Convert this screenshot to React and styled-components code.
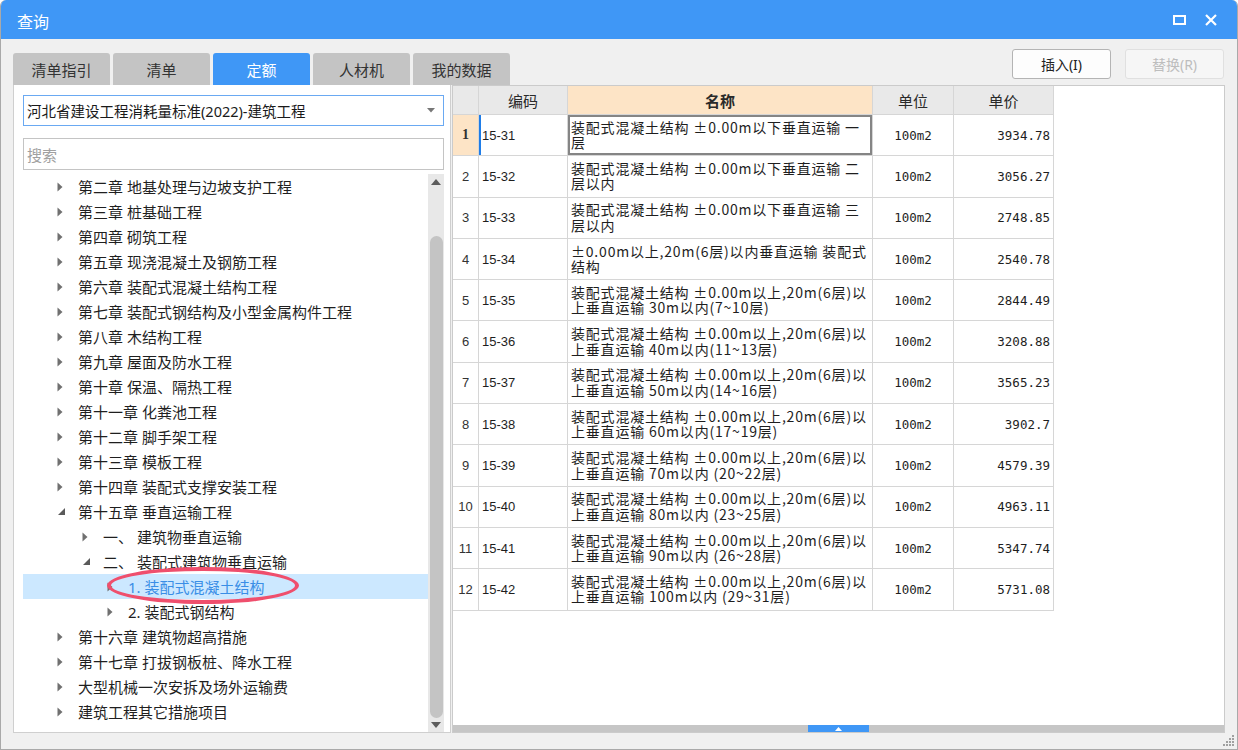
import React from 'react';
import styled, { createGlobalStyle } from 'styled-components';

const GlobalStyle = createGlobalStyle`
  * { box-sizing: border-box; }
  body {
    margin: 0;
    background: #ffffff;
    font-family: "Noto Sans", "Noto Sans CJK SC", sans-serif;
  }
`;

const BLUE = '#3f97f6';
const GRID = '#d6d6d6';

const Window = styled.div`
  position: relative;
  width: 1238px;
  height: 750px;
  display: flex;
  flex-direction: column;
  background: #f0f0f0;
  border: 1px solid #a9a9a9;
  border-top: none;
  border-radius: 6px 6px 0 0;
  overflow: hidden;
`;

const TitleBar = styled.div`
  height: 39px;
  flex: none;
  display: flex;
  align-items: center;
  padding: 0 10px 0 16px;
  background: ${BLUE};
  color: #fff;
  font-family: "Noto Sans CJK SC", sans-serif;
  font-size: 16px;
`;

const Title = styled.span`
  flex: 1;
  margin-top: 2px;
`;

const TitleButton = styled.span`
  width: 32px;
  height: 24px;
  display: flex;
  align-items: center;
  justify-content: center;
`;

const Body = styled.div`
  flex: 1;
  min-height: 0;
  display: grid;
  grid-template-columns: 438px 773px;
  grid-template-rows: 46px 1fr;
  column-gap: 1px;
  padding: 0 12px 16px 12px;
`;

const TabBar = styled.div`
  display: flex;
  align-items: flex-end;
  gap: 3px;
  position: relative;
  z-index: 1;
`;

const Tab = styled.div`
  flex: none;
  width: 97px;
  height: 32px;
  display: flex;
  align-items: center;
  justify-content: center;
  border-radius: 3px 3px 0 0;
  background: ${(p) => (p.$active ? BLUE : '#c4c4c4')};
  color: ${(p) => (p.$active ? '#fff' : '#333')};
  font-family: "Noto Sans CJK SC", sans-serif;
  font-size: 15px;
`;

const ButtonBar = styled.div`
  display: flex;
  justify-content: flex-end;
  align-items: flex-start;
  gap: 14px;
  padding: 10px 1px 0 0;
`;

const Button = styled.div`
  width: 99px;
  height: 30px;
  display: flex;
  align-items: center;
  justify-content: center;
  border-radius: 3px;
  border: 1px solid ${(p) => (p.$disabled ? '#e0e0e0' : '#b4b4b4')};
  background: ${(p) => (p.$disabled ? '#f6f6f6' : '#fdfdfd')};
  color: ${(p) => (p.$disabled ? '#bdbdbd' : '#222')};
  font-family: "Noto Sans", "Noto Sans CJK SC", sans-serif;
  font-size: 14px;
`;

const LeftPanel = styled.div`
  display: flex;
  flex-direction: column;
  min-height: 0;
  background: #fff;
  border: 1px solid #cfcfcf;
  border-top: none;
  padding: 10px 6px 0 9px;
`;

const Select = styled.div`
  height: 31px;
  display: flex;
  align-items: center;
  padding: 0 8px 0 3px;
  border: 1px solid #6aa9f2;
  color: #1a1a1a;
  font-family: "Noto Sans", "Noto Sans CJK SC", sans-serif;
  font-size: 14.5px;
`;

const SelectText = styled.span`
  flex: 1;
`;

const SearchBox = styled.div`
  height: 32px;
  margin-top: 12px;
  display: flex;
  align-items: center;
  padding-left: 3px;
  border: 1px solid #c4c4c4;
  color: #a0a0a0;
  font-family: "Noto Sans CJK SC", sans-serif;
  font-size: 15px;
`;

const TreeArea = styled.div`
  flex: 1;
  min-height: 0;
  margin-top: 4px;
  display: flex;
`;

const TreeList = styled.div`
  flex: 1;
  overflow: hidden;
`;

const TreeRow = styled.div`
  position: relative;
  height: 25px;
  display: flex;
  align-items: center;
  padding-left: ${(p) => 34 + (p.$level - 1) * 25}px;
  background: ${(p) => (p.$selected ? '#cce8ff' : 'transparent')};
  color: ${(p) => (p.$selected ? '#3a8ee6' : '#1f1f1f')};
  font-family: "Noto Sans", "Noto Sans CJK SC", sans-serif;
  font-size: 15px;
  white-space: pre;
`;

const Arrow = styled.span`
  width: 21px;
  height: 25px;
  display: flex;
  align-items: center;
`;

const Highlight = styled.span`
  position: absolute;
  left: 84px;
  top: -7px;
  width: 192px;
  height: 37px;
  border: 4px solid #ef4f6d;
  border-radius: 50%;
`;

const ScrollTrack = styled.div`
  width: 16px;
  display: flex;
  flex-direction: column;
  align-items: center;
  background: #e8e8e8;
`;

const ScrollArrow = styled.div`
  height: ${(p) => p.$h}px;
  display: flex;
  align-items: center;
  justify-content: center;
  flex: none;
`;

const ScrollThumb = styled.div`
  flex: 1;
  width: 13px;
  margin-top: 46px;
  border-radius: 7px;
  background: #c4c4c4;
`;

const RightPanel = styled.div`
  display: flex;
  flex-direction: column;
  min-height: 0;
  background: #fff;
  border: 1px solid #cbcbcb;
`;

const TableArea = styled.div`
  flex: 1;
  min-height: 0;
  overflow: hidden;
`;

const GridRow = styled.div`
  display: grid;
  grid-template-columns: 26px 89px 305px 81px 100px;
  width: 601px;
  height: ${(p) => (p.$header ? 29 : 41.3)}px;
`;

const HeadCell = styled.div`
  display: flex;
  align-items: center;
  justify-content: center;
  border-right: 1px solid ${GRID};
  border-bottom: 1px solid ${GRID};
  background: ${(p) => (p.$accent ? '#fde4c6' : '#e9e9e9')};
  color: #2a2a2a;
  font-family: "Noto Sans CJK SC", sans-serif;
  font-size: 15px;
  font-weight: ${(p) => (p.$accent ? 700 : 400)};
`;

const Cell = styled.div`
  display: flex;
  align-items: center;
  border-right: 1px solid ${GRID};
  border-bottom: 1px solid ${GRID};
  color: #1e1e1e;
  overflow: hidden;
`;

const NumCell = styled(Cell)`
  justify-content: center;
  background: ${(p) => (p.$current ? '#fde4c6' : '#fff')};
  color: #333;
  font-family: ${(p) => (p.$current ? '"Liberation Serif", serif' : '"Liberation Sans", sans-serif')};
  font-size: ${(p) => (p.$current ? 14 : 13)}px;
  font-weight: ${(p) => (p.$current ? 700 : 400)};
`;

const CodeCell = styled(Cell)`
  padding-left: 3px;
  font-family: "Liberation Sans", sans-serif;
  font-size: 13px;
  box-shadow: ${(p) => (p.$current ? `inset 2px 0 0 #1f7de8` : 'none')};
`;

const NameCell = styled(Cell)`
  flex-direction: column;
  align-items: flex-start;
  justify-content: center;
  padding-left: 3px;
  font-family: "Noto Sans CJK SC", sans-serif;
  font-size: 14px;
  letter-spacing: 0.8px;
  white-space: pre;
  box-shadow: ${(p) => (p.$current ? 'inset 0 0 0 2px #858585' : 'none')};
`;

const NameLine = styled.span`
  display: block;
  height: 15.5px;
  line-height: 15.5px;
`;

const UnitCell = styled(Cell)`
  justify-content: center;
  font-family: "DejaVu Sans Mono", monospace;
  font-size: 12.5px;
`;

const PriceCell = styled(Cell)`
  justify-content: flex-end;
  padding-right: 3px;
  font-family: "DejaVu Sans Mono", monospace;
  font-size: 12.5px;
`;

const Splitter = styled.div`
  height: 7px;
  flex: none;
  display: flex;
  justify-content: center;
  background: #c6c6c6;
`;

const SplitterGrip = styled.div`
  width: 61px;
  display: flex;
  align-items: center;
  justify-content: center;
  background: ${BLUE};
`;

const ResizeGrip = styled.svg`
  position: absolute;
  right: 2px;
  bottom: 2px;
`;

const tabs = ['清单指引', '清单', '定额', '人材机', '我的数据'];

const tree = [
  { level: 1, label: '第二章 地基处理与边坡支护工程' },
  { level: 1, label: '第三章 桩基础工程' },
  { level: 1, label: '第四章 砌筑工程' },
  { level: 1, label: '第五章 现浇混凝土及钢筋工程' },
  { level: 1, label: '第六章 装配式混凝土结构工程' },
  { level: 1, label: '第七章 装配式钢结构及小型金属构件工程' },
  { level: 1, label: '第八章 木结构工程' },
  { level: 1, label: '第九章 屋面及防水工程' },
  { level: 1, label: '第十章 保温、隔热工程' },
  { level: 1, label: '第十一章 化粪池工程' },
  { level: 1, label: '第十二章 脚手架工程' },
  { level: 1, label: '第十三章 模板工程' },
  { level: 1, label: '第十四章 装配式支撑安装工程' },
  { level: 1, label: '第十五章 垂直运输工程', open: true },
  { level: 2, label: '一、 建筑物垂直运输' },
  { level: 2, label: '二、 装配式建筑物垂直运输', open: true },
  { level: 3, label: '1. 装配式混凝土结构', selected: true },
  { level: 3, label: '2. 装配式钢结构' },
  { level: 1, label: '第十六章 建筑物超高措施' },
  { level: 1, label: '第十七章 打拔钢板桩、降水工程' },
  { level: 1, label: '大型机械一次安拆及场外运输费' },
  { level: 1, label: '建筑工程其它措施项目' },
];

const above = '装配式混凝土结构 ±0.00m以上,20m(6层)以';

const rows = [
  ['15-31', '装配式混凝土结构 ±0.00m以下垂直运输 一', '层', '3934.78'],
  ['15-32', '装配式混凝土结构 ±0.00m以下垂直运输 二', '层以内', '3056.27'],
  ['15-33', '装配式混凝土结构 ±0.00m以下垂直运输 三', '层以内', '2748.85'],
  ['15-34', '±0.00m以上,20m(6层)以内垂直运输 装配式', '结构', '2540.78'],
  ['15-35', above, '上垂直运输 30m以内(7~10层)', '2844.49'],
  ['15-36', above, '上垂直运输 40m以内(11~13层)', '3208.88'],
  ['15-37', above, '上垂直运输 50m以内(14~16层)', '3565.23'],
  ['15-38', above, '上垂直运输 60m以内(17~19层)', '3902.7'],
  ['15-39', above, '上垂直运输 70m以内 (20~22层)', '4579.39'],
  ['15-40', above, '上垂直运输 80m以内 (23~25层)', '4963.11'],
  ['15-41', above, '上垂直运输 90m以内 (26~28层)', '5347.74'],
  ['15-42', above, '上垂直运输 100m以内 (29~31层)', '5731.08'],
];

const Caret = ({ open }) =>
  open ? (
    <svg width="9" height="9" viewBox="0 0 9 9">
      <polygon points="8,1 8,8 1,8" fill="#5a5a5a" />
    </svg>
  ) : (
    <svg width="6" height="10" viewBox="0 0 6 10">
      <polygon points="0.5,0.5 5.5,5 0.5,9.5" fill="#707070" />
    </svg>
  );

const App = () => (
  <>
    <GlobalStyle />
    <Window>
      <TitleBar>
        <Title>查询</Title>
        <TitleButton>
          <svg width="13" height="10" viewBox="0 0 13 10">
            <rect x="1" y="1" width="11" height="8" fill="none" stroke="#fff" strokeWidth="2" />
          </svg>
        </TitleButton>
        <TitleButton>
          <svg width="12" height="12" viewBox="0 0 12 12">
            <path d="M1 1 L11 11 M11 1 L1 11" stroke="#fff" strokeWidth="2.2" />
          </svg>
        </TitleButton>
      </TitleBar>

      <Body>
        <TabBar>
          {tabs.map((t) => (
            <Tab key={t} $active={t === '定额'}>
              {t}
            </Tab>
          ))}
        </TabBar>
        <ButtonBar>
          <Button>插入(I)</Button>
          <Button $disabled>替换(R)</Button>
        </ButtonBar>

        <LeftPanel>
          <Select>
            <SelectText>河北省建设工程消耗量标准(2022)-建筑工程</SelectText>
            <svg width="8" height="5" viewBox="0 0 8 5">
              <polygon points="0,0 8,0 4,4.5" fill="#777" />
            </svg>
          </Select>
          <SearchBox>搜索</SearchBox>
          <TreeArea>
            <TreeList>
              {tree.map((n) => (
                <TreeRow key={n.label} $level={n.level} $selected={n.selected}>
                  <Arrow>
                    <Caret open={n.open} />
                  </Arrow>
                  {n.label}
                  {n.selected && <Highlight />}
                </TreeRow>
              ))}
            </TreeList>
            <ScrollTrack>
              <ScrollArrow $h={16}>
                <svg width="10" height="6" viewBox="0 0 10 6">
                  <polygon points="0,6 10,6 5,0" fill="#5c5c5c" />
                </svg>
              </ScrollArrow>
              <ScrollThumb />
              <ScrollArrow $h={14}>
                <svg width="10" height="6" viewBox="0 0 10 6">
                  <polygon points="0,0 10,0 5,6" fill="#5c5c5c" />
                </svg>
              </ScrollArrow>
            </ScrollTrack>
          </TreeArea>
        </LeftPanel>

        <RightPanel>
          <TableArea>
            <GridRow $header>
              <HeadCell />
              <HeadCell>编码</HeadCell>
              <HeadCell $accent>名称</HeadCell>
              <HeadCell>单位</HeadCell>
              <HeadCell>单价</HeadCell>
            </GridRow>
            {rows.map(([code, l1, l2, price], i) => {
              const current = i === 0;
              return (
                <GridRow key={code}>
                  <NumCell $current={current}>{i + 1}</NumCell>
                  <CodeCell $current={current}>{code}</CodeCell>
                  <NameCell $current={current}>
                    <NameLine>{l1}</NameLine>
                    <NameLine>{l2}</NameLine>
                  </NameCell>
                  <UnitCell>100m2</UnitCell>
                  <PriceCell>{price}</PriceCell>
                </GridRow>
              );
            })}
          </TableArea>
          <Splitter>
            <SplitterGrip>
              <svg width="7" height="4" viewBox="0 0 7 4">
                <polygon points="0,4 7,4 3.5,0" fill="#fff" />
              </svg>
            </SplitterGrip>
          </Splitter>
        </RightPanel>
      </Body>

      <ResizeGrip width="12" height="12" viewBox="0 0 12 12">
        {[
          [9, 0],
          [9, 3],
          [6, 3],
          [9, 6],
          [6, 6],
          [3, 6],
          [9, 9],
          [6, 9],
          [3, 9],
          [0, 9],
        ].map(([x, y]) => (
          <rect key={`${x}-${y}`} x={x} y={y} width="2" height="2" fill="#a0a0a0" />
        ))}
      </ResizeGrip>
    </Window>
  </>
);

export default App;
